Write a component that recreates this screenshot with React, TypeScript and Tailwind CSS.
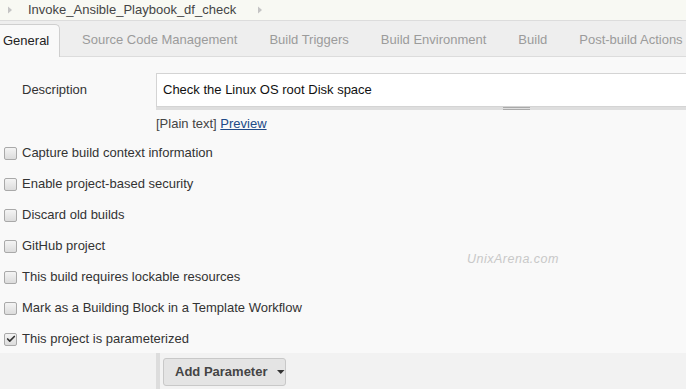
import { Check } from 'lucide-react';

const tabs = ['General', 'Source Code Management', 'Build Triggers', 'Build Environment', 'Build', 'Post-build Actions'];

const options = [
  { label: 'Capture build context information', checked: false },
  { label: 'Enable project-based security', checked: false },
  { label: 'Discard old builds', checked: false },
  { label: 'GitHub project', checked: false },
  { label: 'This build requires lockable resources', checked: false },
  { label: 'Mark as a Building Block in a Template Workflow', checked: false },
  { label: 'This project is parameterized', checked: true },
];

const Chevron = () => (
  <svg width="6" height="8" viewBox="0 0 6 8" className="shrink-0">
    <path d="M1 0.5 L5 4 L1 7.5 Z" fill="#c4c4c4" />
  </svg>
);

const CheckBox = ({ checked }: { checked: boolean }) => (
  <span className="flex h-[13px] w-[13px] shrink-0 items-center justify-center rounded-[2px] border border-[#a9a9a9] bg-gradient-to-b from-[#f4f4f4] to-[#dcdcdc]">
    {checked && <Check size={10} strokeWidth={4} className="text-[#333]" />}
  </span>
);

export default function App() {
  return (
    <div className="h-[389px] w-[686px] overflow-hidden bg-[#f9f9f9] text-[13px] text-[#333] font-['Liberation_Sans',Arial,sans-serif]">
      <div className="flex h-[20px] items-center bg-[#f8f9f3] pl-[7px]">
        <Chevron />
        <span className="ml-[15px] text-[#444]">Invoke_Ansible_Playbook_df_check</span>
        <span className="ml-[21px]">
          <Chevron />
        </span>
      </div>

      <div className="flex h-[37px] items-end whitespace-nowrap border-t border-b border-[#dcdcdc] bg-[#eeeeee]">
        {tabs.map((tab, i) =>
          i === 0 ? (
            <div
              key={tab}
              className="-mb-px flex h-[33px] w-[60px] shrink-0 items-center rounded-tr-[5px] border border-l-0 border-b-0 border-[#cfcfcf] bg-[#f9f9f9] pl-[3px] text-[13px] text-[#222]"
            >
              {tab}
            </div>
          ) : (
            <div key={tab} className="flex h-[33px] shrink-0 items-center pl-[22px] pr-[10px] text-[#9b9b9b]">
              {tab}
            </div>
          )
        )}
      </div>

      <div className="mt-[16px] flex">
        <div className="w-[156px] shrink-0 pl-[22px] pt-[7px]">Description</div>
        <div className="flex-1">
          <div className="flex h-[34px] items-center border border-r-0 border-[#d4d4d4] bg-white pl-[6px] text-[13px] text-[#111]">
            Check the Linux OS root Disk space
          </div>
          <div className="relative h-[3px] bg-[#dedede]">
            <div className="absolute left-[347px] top-0 h-px w-[27px] bg-[#aaa]" />
            <div className="absolute left-[347px] top-[2px] h-px w-[27px] bg-[#aaa]" />
          </div>
          <div className="mt-[4px] text-[13px] text-[#444]">
            [Plain text] <span className="text-[#204a87] underline">Preview</span>
          </div>
        </div>
      </div>

      <div className="relative mt-[4px] flex flex-col">
        {options.map((o) => (
          <div key={o.label} className="flex h-[31px] items-center pl-[4px]">
            <CheckBox checked={o.checked} />
            <span className="ml-[5px]">{o.label}</span>
          </div>
        ))}
        <span className="absolute left-[467px] top-[112px] text-[12.5px] italic tracking-[0.5px] text-[#c8c8c8]">
          UnixArena.com
        </span>
      </div>

      <div className="-mt-[2px] flex h-[40px] bg-[#f2f2f2]">
        <div className="ml-[156px] w-[4px] bg-[#dddddd]" />
        <div className="pl-[3px] pt-[5px]">
          <button className="flex h-[28px] w-[123px] items-center whitespace-nowrap rounded-[3px] border border-[#c8c8c8] bg-[#e4e4e4] pl-[11px] text-[13px] font-bold text-[#444]">
            Add Parameter
            <svg width="8" height="4" viewBox="0 0 8 4" className="ml-[10px]">
              <path d="M0 0 L8 0 L4 4 Z" fill="#333" />
            </svg>
          </button>
        </div>
      </div>
    </div>
  );
}
